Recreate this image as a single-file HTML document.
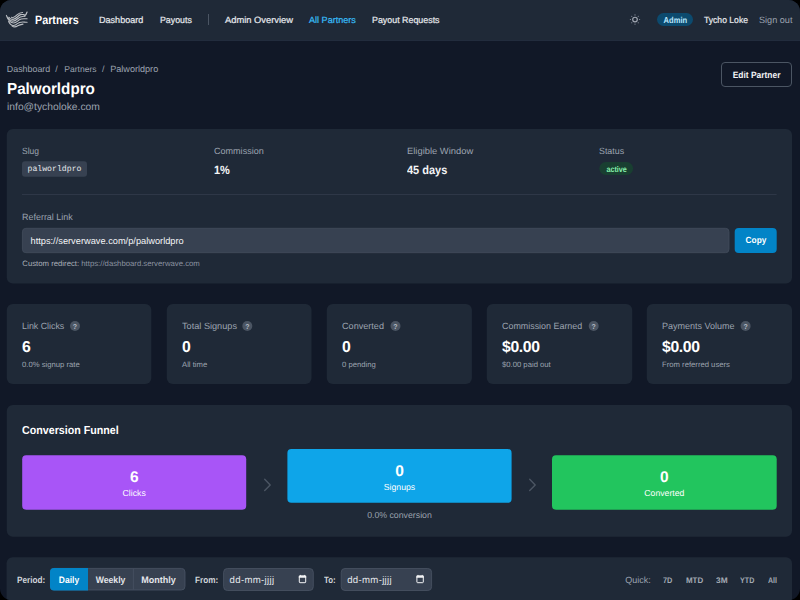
<!DOCTYPE html>
<html><head><meta charset="utf-8">
<style>
*{box-sizing:border-box;margin:0;padding:0}
html,body{width:800px;height:600px;overflow:hidden;background:#000}
body{font-family:"Liberation Sans",sans-serif;color:#e5e7eb;position:relative;text-rendering:geometricPrecision}
#win{position:absolute;left:0;top:0;width:800px;height:600px;background:#111827;border-radius:11.5px;overflow:hidden}
#bg{position:absolute;left:0;top:0}
.a{position:absolute;white-space:nowrap;line-height:1}
.t9{font-size:9.1px}
.lbl{font-size:9.05px;color:#9ca3af}
.val{font-size:12px;font-weight:bold;color:#f3f4f6;transform:scaleX(.915);transform-origin:0 50%}
.sub{font-size:7.7px;color:#9ca3af}
.big{font-size:15.8px;font-weight:bold;color:#fff;letter-spacing:-.4px}
.fnum{font-size:15.5px;font-weight:bold;color:#fff}
.flab{font-size:8.7px;color:#fff}
.qk{font-size:7.6px;font-weight:bold;color:#a3a9b4}
.bc{color:#9ca3af}
.sx{display:inline-block;transform:scaleX(.88);transform-origin:50% 50%}
.pb{font-size:8.7px;font-weight:bold;height:22.5px;line-height:24px}
</style></head><body>
<div id="win">
<svg id="bg" width="800" height="600" viewBox="0 0 800 600">
<rect x="0" y="0" width="800" height="41" rx="0" fill="#1f2937"/>
<rect x="0" y="40.2" width="800" height="0.8" rx="0" fill="#232e3f"/>
<g fill="none" stroke="#babdc2" stroke-width="1.1" stroke-linecap="round">
<path d="M11.5 17.3 C13 18.5,15.5 16.5,17.3 14.7 S20 12.6,22.6 12.5"/>
<path d="M9 17.3 C11.5 20.5,14.5 19.8,17.3 17 S21 14.2,24.2 14.6"/>
<path d="M7.6 17.2 C10.5 22.5,14.5 21.8,17.3 19 S22 16,25 16.3"/>
<path d="M24.4 16 C25.8 15.2,26.6 13.6,27 12.1" stroke-width="1.3"/>
<path d="M6.4 15.4 C9 23.5,14 24.3,17.3 21.3 S22 18.6,27.1 18.8"/>
<path d="M8.6 21.5 C11 26.5,14.5 26.3,17.3 23.7 S22 22,27.1 22.3"/>
<path d="M12 25.8 C14 27.6,16 27,17.8 25.8 S21 24.4,23 24.1"/>
</g>
<rect x="208" y="14" width="1" height="11" rx="0" fill="#4b5563"/>
<circle cx="635" cy="19.5" r="2.3" fill="none" stroke="#a1a7b2" stroke-width="1.15"/>
<circle cx="639.60" cy="19.50" r=".58" fill="#8f96a3"/>
<circle cx="638.25" cy="22.75" r=".58" fill="#8f96a3"/>
<circle cx="635.00" cy="24.10" r=".58" fill="#8f96a3"/>
<circle cx="631.75" cy="22.75" r=".58" fill="#8f96a3"/>
<circle cx="630.40" cy="19.50" r=".58" fill="#8f96a3"/>
<circle cx="631.75" cy="16.25" r=".58" fill="#8f96a3"/>
<circle cx="635.00" cy="14.90" r=".58" fill="#8f96a3"/>
<circle cx="638.25" cy="16.25" r=".58" fill="#8f96a3"/>
<rect x="657" y="13" width="36" height="13" rx="6.5" fill="#0c4a6e"/>
<rect x="721.5" y="62.5" width="70" height="24" rx="3.5" fill="none" stroke="#4b5563" stroke-width="1"/>
<rect x="6.8" y="129" width="785.2" height="154.4" rx="6" fill="#1f2937"/>
<rect x="22" y="161.3" width="65" height="15.5" rx="3" fill="#374151"/>
<rect x="599.3" y="162" width="33.8" height="13" rx="6.5" fill="#193f31"/>
<rect x="22" y="194" width="754.6" height="1" rx="0" fill="#2e3747"/>
<rect x="22.4" y="228.3" width="706.6" height="24.4" rx="3.5" fill="#374151" stroke="#424c5c" stroke-width="0.8"/>
<rect x="734.7" y="228" width="42" height="25" rx="4" fill="#0284c7"/>
<rect x="6.8" y="303.9" width="144.5" height="80.1" rx="6" fill="#1f2937"/>
<circle cx="75" cy="326" r="5" fill="#4b5563"/>
<rect x="166.8" y="303.9" width="144.7" height="80.1" rx="6" fill="#1f2937"/>
<circle cx="247.3" cy="326" r="5" fill="#4b5563"/>
<rect x="326.8" y="303.9" width="145.1" height="80.1" rx="6" fill="#1f2937"/>
<circle cx="395.5" cy="326" r="5" fill="#4b5563"/>
<rect x="486.8" y="303.9" width="145.39999999999998" height="80.1" rx="6" fill="#1f2937"/>
<circle cx="593.7" cy="326" r="5" fill="#4b5563"/>
<rect x="646.8" y="303.9" width="145.2" height="80.1" rx="6" fill="#1f2937"/>
<circle cx="745.6" cy="326" r="5" fill="#4b5563"/>
<rect x="6.8" y="405" width="785.2" height="131.8" rx="6" fill="#1f2937"/>
<rect x="22.2" y="455.3" width="224" height="54.4" rx="4" fill="#a855f7"/>
<rect x="287.4" y="449" width="224.2" height="53.8" rx="4" fill="#0ea5e9"/>
<rect x="552" y="455.3" width="224.7" height="54.4" rx="4" fill="#22c55e"/>
<path d="M264.7 479.2 L270.2 484.9 L264.7 490.6" fill="none" stroke="#4b5563" stroke-width="1.4" stroke-linecap="round" stroke-linejoin="round"/>
<path d="M529.7 479.2 L535.2 484.9 L529.7 490.6" fill="none" stroke="#4b5563" stroke-width="1.4" stroke-linecap="round" stroke-linejoin="round"/>
<rect x="6.6" y="557.3" width="785.4" height="60" rx="6" fill="#1f2937"/>
<rect x="50.4" y="568.4" width="134.6" height="21.6" rx="3.6" fill="#374151" stroke="#4a5464" stroke-width="0.8"/>
<path d="M88 568 H54 a4 4 0 0 0 -4 4 V586.4 a4 4 0 0 0 4 4 H88 Z" fill="#0284c7"/>
<rect x="132.9" y="568.8" width="0.9" height="20.8" rx="0" fill="#465060"/>
<rect x="223.6" y="568.5" width="89.7" height="22" rx="3.8" fill="#374151" stroke="#4a5464" stroke-width="0.8"/>
<rect x="299.29999999999995" y="576.1" width="6.4" height="6.6" rx=".7" fill="none" stroke="#f3f4f6" stroke-width="1"/><rect x="298.79999999999995" y="575.6" width="7.4" height="2.2" rx=".4" fill="#f3f4f6"/><rect x="299.99999999999994" y="574.9000000000001" width=".8" height="1.2" fill="#f3f4f6"/><rect x="304.19999999999993" y="574.9000000000001" width=".8" height="1.2" fill="#f3f4f6"/>
<rect x="341.2" y="568.5" width="90.4" height="22" rx="3.8" fill="#374151" stroke="#4a5464" stroke-width="0.8"/>
<rect x="416.9" y="576.1" width="6.4" height="6.6" rx=".7" fill="none" stroke="#f3f4f6" stroke-width="1"/><rect x="416.4" y="575.6" width="7.4" height="2.2" rx=".4" fill="#f3f4f6"/><rect x="417.59999999999997" y="574.9000000000001" width=".8" height="1.2" fill="#f3f4f6"/><rect x="421.79999999999995" y="574.9000000000001" width=".8" height="1.2" fill="#f3f4f6"/>
</svg>
<div class="a" style="left:35.1px;top:13.76px;font-size:12.1px;font-weight:bold;color:#fff;transform:scaleX(0.8890);transform-origin:0 10.24px;">Partners</div>
<div class="a" style="left:99.4px;top:16.30px;font-size:9.1px;font-weight:normal;color:#e5e7eb;transform:scaleX(0.9951);transform-origin:0 7.70px;-webkit-text-stroke:.22px">Dashboard</div>
<div class="a" style="left:159.5px;top:16.30px;font-size:9.1px;font-weight:normal;color:#e5e7eb;transform:scaleX(0.9671);transform-origin:0 7.70px;-webkit-text-stroke:.22px">Payouts</div>
<div class="a" style="left:225px;top:16.30px;font-size:9.1px;font-weight:normal;color:#e5e7eb;transform:scaleX(1.0280);transform-origin:0 7.70px;-webkit-text-stroke:.22px">Admin Overview</div>
<div class="a" style="left:308.8px;top:16.30px;font-size:9.1px;font-weight:normal;color:#38bdf8;transform:scaleX(0.9971);transform-origin:0 7.70px;-webkit-text-stroke:.22px">All Partners</div>
<div class="a" style="left:371.5px;top:16.30px;font-size:9.1px;font-weight:normal;color:#e5e7eb;transform:scaleX(0.9754);transform-origin:0 7.70px;-webkit-text-stroke:.22px">Payout Requests</div>
<div class="a " style="left:657px;top:13px;width:36px;text-align:center;color:#bae6fd;font-size:8.6px;font-weight:bold;line-height:14px"><span class="sx">Admin</span></div>
<div class="a" style="left:704px;top:16.30px;font-size:9.1px;font-weight:normal;color:#e5e7eb;transform:scaleX(0.9454);transform-origin:0 7.70px;-webkit-text-stroke:.22px">Tycho Loke</div>
<div class="a" style="left:758.5px;top:16.30px;font-size:9.1px;font-weight:normal;color:#9ca3af;transform:scaleX(1.0032);transform-origin:0 7.70px;">Sign out</div>
<div class="a bc" style="left:6.8px;top:64.75px;font-size:8.9px">Dashboard</div>
<div class="a bc" style="left:55.3px;top:64.75px;font-size:8.9px">/</div>
<div class="a bc" style="left:64.3px;top:64.75px;font-size:8.55px">Partners</div>
<div class="a bc" style="left:101.9px;top:64.75px;font-size:8.9px">/</div>
<div class="a bc" style="left:110.2px;top:64.75px;font-size:9.1px">Palworldpro</div>
<div class="a" style="left:7px;top:82.46px;font-size:16px;font-weight:bold;color:#fff;transform:scaleX(0.9507);transform-origin:0 13.54px;">Palworldpro</div>
<div class="a " style="left:7px;top:103px;font-size:10.3px;color:#9ca3af">info@tycholoke.com</div>
<div class="a" style="left:721px;top:71.30px;width:71.2px;text-align:center;font-size:9.1px;font-weight:bold;color:#f3f4f6;transform:scaleX(0.9257);transform-origin:50% 7.70px;">Edit Partner</div>
<div class="a" style="left:22.4px;top:147.34px;font-size:9.05px;font-weight:normal;color:#9ca3af;transform:scaleX(0.9385);transform-origin:0 7.66px;">Slug</div>
<div class="a " style="left:22px;top:161px;width:65px;text-align:center;color:#e5e7eb;font-family:'Liberation Mono',monospace;font-size:8.2px;line-height:17.6px">palworldpro</div>
<div class="a" style="left:214.4px;top:147.34px;font-size:9.05px;font-weight:normal;color:#9ca3af;transform:scaleX(0.9993);transform-origin:0 7.66px;">Commission</div>
<div class="a val" style="left:214.3px;top:164px;">1%</div>
<div class="a" style="left:407px;top:147.34px;font-size:9.05px;font-weight:normal;color:#9ca3af;transform:scaleX(1.0371);transform-origin:0 7.66px;">Eligible Window</div>
<div class="a val" style="left:407px;top:164px;">45 days</div>
<div class="a" style="left:599.4px;top:147.34px;font-size:9.05px;font-weight:normal;color:#9ca3af;transform:scaleX(0.9783);transform-origin:0 7.66px;">Status</div>
<div class="a " style="left:599.3px;top:162px;width:33.8px;text-align:center;color:#86efac;font-size:8.2px;font-weight:bold;line-height:15.4px"><span class="sx">active</span></div>
<div class="a" style="left:22.4px;top:213.34px;font-size:9.05px;font-weight:normal;color:#9ca3af;transform:scaleX(0.9892);transform-origin:0 7.66px;">Referral Link</div>
<div class="a " style="left:30.5px;top:228px;color:#f3f4f6;font-size:9.25px;line-height:26.6px">https://serverwave.com/p/palworldpro</div>
<div class="a" style="left:734.7px;top:236.38px;width:42px;text-align:center;font-size:9px;font-weight:bold;color:#fff;transform:scaleX(0.9244);transform-origin:50% 7.62px;">Copy</div>
<div class="a " style="left:22.3px;top:259.7px;font-size:7.75px"><span style="color:#aab0ba">Custom redirect:</span> <span style="color:#8b93a1">https://dashboard.serverwave.com</span></div>
<div class="a" style="left:22px;top:322.34px;font-size:9.05px;font-weight:normal;color:#9ca3af;transform:scaleX(0.9781);transform-origin:0 7.66px;">Link Clicks</div>
<div class="a " style="left:70px;top:322px;width:10px;text-align:center;color:#b4bac4;font-size:7px;font-weight:bold;line-height:11px">?</div>
<div class="a big" style="left:22px;top:340.3px;">6</div>
<div class="a sub" style="left:22px;top:360.7px;">0.0% signup rate</div>
<div class="a" style="left:182px;top:322.34px;font-size:9.05px;font-weight:normal;color:#9ca3af;transform:scaleX(1.0122);transform-origin:0 7.66px;">Total Signups</div>
<div class="a " style="left:242.3px;top:322px;width:10px;text-align:center;color:#b4bac4;font-size:7px;font-weight:bold;line-height:11px">?</div>
<div class="a big" style="left:182px;top:340.3px;">0</div>
<div class="a sub" style="left:182px;top:360.7px;">All time</div>
<div class="a" style="left:342px;top:322.34px;font-size:9.05px;font-weight:normal;color:#9ca3af;transform:scaleX(1.0058);transform-origin:0 7.66px;">Converted</div>
<div class="a " style="left:390.5px;top:322px;width:10px;text-align:center;color:#b4bac4;font-size:7px;font-weight:bold;line-height:11px">?</div>
<div class="a big" style="left:342px;top:340.3px;">0</div>
<div class="a sub" style="left:342px;top:360.7px;">0 pending</div>
<div class="a" style="left:502px;top:322.34px;font-size:9.05px;font-weight:normal;color:#9ca3af;transform:scaleX(0.9849);transform-origin:0 7.66px;">Commission Earned</div>
<div class="a " style="left:588.7px;top:322px;width:10px;text-align:center;color:#b4bac4;font-size:7px;font-weight:bold;line-height:11px">?</div>
<div class="a big" style="left:502px;top:340.3px;">$0.00</div>
<div class="a sub" style="left:502px;top:360.7px;">$0.00 paid out</div>
<div class="a" style="left:662px;top:322.34px;font-size:9.05px;font-weight:normal;color:#9ca3af;transform:scaleX(0.9939);transform-origin:0 7.66px;">Payments Volume</div>
<div class="a " style="left:740.6px;top:322px;width:10px;text-align:center;color:#b4bac4;font-size:7px;font-weight:bold;line-height:11px">?</div>
<div class="a big" style="left:662px;top:340.3px;">$0.00</div>
<div class="a sub" style="left:662px;top:360.7px;">From referred users</div>
<div class="a" style="left:22.3px;top:425.18px;font-size:11.6px;font-weight:bold;color:#fff;transform:scaleX(0.9210);transform-origin:0 9.82px;">Conversion Funnel</div>
<div class="a fnum" style="left:22.2px;top:470.2px;width:224px;text-align:center;">6</div>
<div class="a flab" style="left:22.2px;top:488.8px;width:224px;text-align:center;">Clicks</div>
<div class="a fnum" style="left:287.4px;top:463.9px;width:224.2px;text-align:center;">0</div>
<div class="a flab" style="left:287.4px;top:482.5px;width:224.2px;text-align:center;">Signups</div>
<div class="a fnum" style="left:552px;top:470.2px;width:224.7px;text-align:center;">0</div>
<div class="a flab" style="left:552px;top:488.8px;width:224.7px;text-align:center;">Converted</div>
<div class="a " style="left:287.4px;top:510.7px;width:224.2px;text-align:center;font-size:8.75px;color:#9ca3af">0.0% conversion</div>
<div class="a" style="left:17px;top:576.21px;font-size:9.2px;font-weight:bold;color:#d1d5db;transform:scaleX(0.8914);transform-origin:0 7.79px;">Period:</div>
<div class="a" style="left:50px;top:576.13px;width:38px;text-align:center;font-size:9.3px;font-weight:bold;color:#fff;transform:scaleX(0.9110);transform-origin:50% 7.87px;">Daily</div>
<div class="a" style="left:88px;top:576.13px;width:45px;text-align:center;font-size:9.3px;font-weight:bold;color:#e5e7eb;transform:scaleX(0.9331);transform-origin:50% 7.87px;">Weekly</div>
<div class="a" style="left:133px;top:576.13px;width:51.2px;text-align:center;font-size:9.3px;font-weight:bold;color:#e5e7eb;transform:scaleX(0.9679);transform-origin:50% 7.87px;">Monthly</div>
<div class="a" style="left:195px;top:576.21px;font-size:9.2px;font-weight:bold;color:#d1d5db;transform:scaleX(0.8901);transform-origin:0 7.79px;">From:</div>
<div class="a" style="left:324.3px;top:576.21px;font-size:9.2px;font-weight:bold;color:#d1d5db;transform:scaleX(0.8590);transform-origin:0 7.79px;">To:</div>
<div class="a " style="left:229.6px;top:568px;color:#e5e7eb;font-size:9.6px;line-height:25px;letter-spacing:.32px">dd-mm-jjjj</div>
<div class="a " style="left:347.2px;top:568px;color:#e5e7eb;font-size:9.6px;line-height:25px;letter-spacing:.32px">dd-mm-jjjj</div>
<div class="a " style="left:625.3px;top:575.8px;color:#9ca3af;font-size:9px">Quick:</div>
<div class="a" style="left:663.1px;top:577.14px;font-size:8.1px;font-weight:bold;color:#a3a9b4;transform:scaleX(0.9078);transform-origin:0 6.86px;">7D</div>
<div class="a" style="left:685.7px;top:577.14px;font-size:8.1px;font-weight:bold;color:#a3a9b4;transform:scaleX(0.9803);transform-origin:0 6.86px;">MTD</div>
<div class="a" style="left:715.6px;top:577.14px;font-size:8.1px;font-weight:bold;color:#a3a9b4;transform:scaleX(1.0309);transform-origin:0 6.86px;">3M</div>
<div class="a" style="left:739.7px;top:577.14px;font-size:8.1px;font-weight:bold;color:#a3a9b4;transform:scaleX(0.8827);transform-origin:0 6.86px;">YTD</div>
<div class="a" style="left:767.5px;top:577.14px;font-size:8.1px;font-weight:bold;color:#a3a9b4;transform:scaleX(0.8695);transform-origin:0 6.86px;">All</div>
</div>
</body></html>
